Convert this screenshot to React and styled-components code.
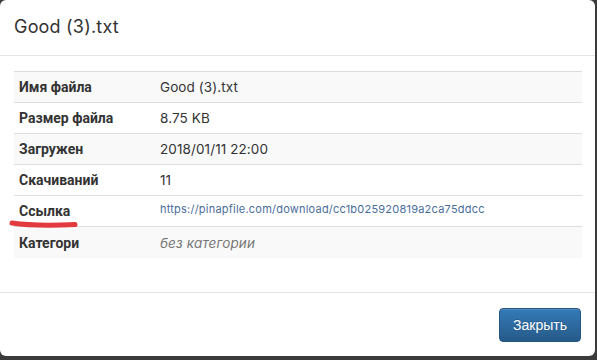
import React from "react";
import styled, { createGlobalStyle } from "styled-components";

const Global = createGlobalStyle`
  html, body { margin: 0; padding: 0; background: #3b3b3b; }
  body { width: 597px; height: 360px; overflow: hidden; }
`;

const Modal = styled.div`
  width: 595px;
  height: 356px;
  background: #fff;
  border-radius: 6px;
  display: flex;
  flex-direction: column;
  box-sizing: border-box;
`;

const Header = styled.div`
  height: 56px;
  box-sizing: border-box;
  padding: 0 14px;
  display: flex;
  align-items: center;
  border-bottom: 1px solid #e5e5e5;
`;

const Title = styled.h4`
  margin: 0;
  font-family: Inter, "Open Sans", sans-serif;
  font-weight: 400;
  font-size: 18px;
  color: #333;
  letter-spacing: 0.2px;
  padding-bottom: 2px;
`;

const Body = styled.div`
  flex: 1;
  padding: 15px 13px 0 14px;
`;

const Table = styled.div`
  display: flex;
  flex-direction: column;
  border-top: 1px solid #dddddd;
`;

const Row = styled.div`
  display: grid;
  grid-template-columns: 146px 1fr;
  height: 31px;
  box-sizing: border-box;
  align-items: center;
  background: ${(p) => (p.$striped ? "#f9f9f9" : "#fff")};
  border-bottom: ${(p) => (p.$last ? "none" : "1px solid #dddddd")};
`;

const Label = styled.div`
  position: relative;
  padding-left: 5px;
  font-family: Roboto, "Liberation Sans", sans-serif;
  font-weight: 700;
  font-size: 14px;
  color: #333;
`;

const Value = styled.div`
  font-family: Inter, "Open Sans", sans-serif;
  font-size: 13.5px;
  color: #333;
  letter-spacing: 0.1px;
`;

const LinkValue = styled.a`
  font-family: Inter, "Open Sans", sans-serif;
  font-size: 11px;
  color: #4a6d9a;
  text-decoration: none;
  letter-spacing: 0.22px;
  position: relative;
  top: -3px;
`;

const Muted = styled.span`
  font-style: italic;
  color: #777;
`;

const Scribble = styled.svg`
  position: absolute;
  left: -5px;
  top: 17px;
  overflow: visible;
`;

const Footer = styled.div`
  height: 64px;
  box-sizing: border-box;
  border-top: 1px solid #e5e5e5;
  display: flex;
  align-items: center;
  justify-content: flex-end;
  padding: 0 14px 0 0;
`;

const Button = styled.button`
  width: 82px;
  height: 34px;
  border: 1px solid #245580;
  border-radius: 4px;
  background: linear-gradient(#337ab7, #265a88);
  color: #fff;
  font-family: "Liberation Sans", Arial, sans-serif;
  font-size: 14px;
  text-shadow: 0 -1px 0 rgba(0, 0, 0, 0.2);
  box-shadow: inset 0 1px 0 rgba(255, 255, 255, 0.15);
  cursor: pointer;
`;

const rows = [
  { label: "Имя файла", value: "Good (3).txt", striped: true },
  { label: "Размер файла", value: "8.75 KB" },
  { label: "Загружен", value: "2018/01/11 22:00", striped: true },
  { label: "Скачиваний", value: "11" },
  { label: "Ссылка", link: "https://pinapfile.com/download/cc1b025920819a2ca75ddcc", mark: true },
  { label: "Категори", muted: "без категории", striped: true, last: true },
];

export default function App() {
  return (
    <>
      <Global />
      <Modal>
        <Header>
          <Title>Good (3).txt</Title>
        </Header>
        <Body>
          <Table>
            {rows.map((r) => (
              <Row key={r.label} $striped={r.striped} $last={r.last}>
                <Label>
                  {r.label}
                  {r.mark && (
                    <Scribble width="70" height="8" viewBox="0 0 70 8">
                      <path
                        d="M3 3 C 20 5.5, 45 5.5, 66 4.5"
                        stroke="#e23a3f"
                        strokeWidth="5"
                        strokeLinecap="round"
                        fill="none"
                      />
                    </Scribble>
                  )}
                </Label>
                {r.link ? (
                  <div>
                    <LinkValue href="#">{r.link}</LinkValue>
                  </div>
                ) : (
                  <Value>{r.muted ? <Muted>{r.muted}</Muted> : r.value}</Value>
                )}
              </Row>
            ))}
          </Table>
        </Body>
        <Footer>
          <Button>Закрыть</Button>
        </Footer>
      </Modal>
    </>
  );
}
